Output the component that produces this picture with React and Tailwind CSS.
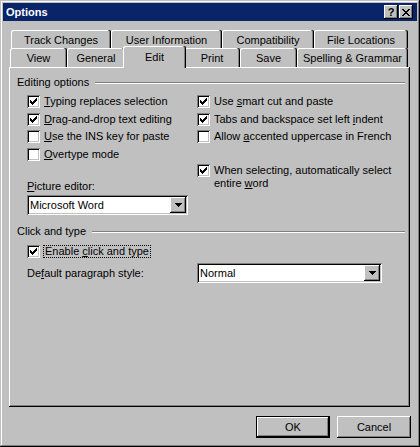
import React from 'react';

// Classic Windows "Options" dialog (Word, Edit tab)

const raised = 'shadow-[inset_-1px_-1px_#000,inset_1px_1px_#fff,inset_-2px_-2px_#808080]';
const sunken = 'shadow-[inset_1px_1px_#808080,inset_-1px_-1px_#fff,inset_2px_2px_#000,inset_-2px_-2px_#c0c0c0]';

const CheckMark = () => {
  const cols = [2, 3, 4, 3, 2, 1, 0];
  return (
    <svg width="7" height="7" viewBox="0 0 7 7" shapeRendering="crispEdges">
      {cols.map((top, x) => (
        <rect key={x} x={x} y={top} width="1" height="3" fill="#000" />
      ))}
    </svg>
  );
};

const Box = ({ checked }) => (
  <span className={`w-[13px] h-[13px] shrink-0 bg-white flex items-center justify-center ${sunken}`}>
    {checked && <CheckMark />}
  </span>
);

const CheckRow = ({ checked, h = 'h-[17px]', children }) => (
  <div className={`flex items-center gap-[4px] ${h}`}>
    <Box checked={checked} />
    <span className="leading-[13px] whitespace-nowrap">{children}</span>
  </div>
);

const Arrow = () => (
  <svg width="7" height="4" viewBox="0 0 7 4" shapeRendering="crispEdges">
    <path d="M0 0h7v1h-7z M1 1h5v1h-5z M2 2h3v1h-3z M3 3h1v1h-1z" fill="#000" />
  </svg>
);

const Combo = ({ w, text }) => (
  <div className={`${w} h-[20px] bg-white flex items-stretch p-[2px] ${sunken}`}>
    <span className="flex-1 pl-[1px] flex items-center">{text}</span>
    <span className={`w-[16px] bg-[#c0c0c0] flex items-center justify-center ${raised}`}>
      <Arrow />
    </span>
  </div>
);

const GroupLabel = ({ children }) => (
  <div className="flex items-center gap-[6px] h-[13px]">
    <span className="leading-[13px]">{children}</span>
    <div className="flex-1 border-t border-t-[#808080] border-b border-b-white" />
  </div>
);

const tabShadow = 'shadow-[inset_-1px_0_#000,inset_-2px_0_#808080,inset_1px_1px_#fff]';

const Tab = ({ w, label, selected }) =>
  selected ? (
    <div
      className={`${w} -mx-[2px] -mt-[2px] h-[22px] self-start relative z-10 bg-[#c0c0c0] rounded-t-[2px] flex items-center justify-center pt-[1px] ${tabShadow}`}
    >
      {label}
    </div>
  ) : (
    <div className={`${w} h-full rounded-t-[2px] flex items-center justify-center pt-[2px] ${tabShadow}`}>{label}</div>
  );

export default function App() {
  return (
    <div className="w-[420px] h-[447px] p-[3px] bg-[#c0c0c0] text-[11px] leading-[13px] text-black font-['Liberation_Sans',Arial,sans-serif] shadow-[inset_-1px_-1px_#000,inset_1px_1px_#c0c0c0,inset_-2px_-2px_#808080,inset_2px_2px_#fff]">
      {/* title bar */}
      <div className="h-[18px] bg-[#0a246a] flex items-center justify-between pl-[3px] pr-[4px]">
        <span className="text-white font-bold">Options</span>
        <div className="flex gap-[1px]">
          <span className={`w-[14px] h-[14px] bg-[#c0c0c0] flex items-center justify-center font-bold text-[11px] leading-none ${raised}`}>
            ?
          </span>
          <span className={`w-[14px] h-[14px] bg-[#c0c0c0] flex items-center justify-center ${raised}`}>
            <svg width="8" height="7" viewBox="0 0 8 7" shapeRendering="crispEdges">
              <path
                d="M0 0h2v1h-2z M6 0h2v1h-2z M1 1h2v1h-2z M5 1h2v1h-2z M2 2h4v1h-4z M3 3h2v1h-2z M2 4h4v1h-4z M1 5h2v1h-2z M5 5h2v1h-2z M0 6h2v1h-2z M6 6h2v1h-2z"
                fill="#000"
              />
            </svg>
          </span>
        </div>
      </div>

      {/* tab control */}
      <div className="ml-[6px] w-[401px]">
        <div className="mt-[9px] h-[18px] flex pl-[2px]">
          <Tab w="w-[100px]" label="Track Changes" />
          <Tab w="w-[111px]" label="User Information" />
          <Tab w="w-[92px]" label="Compatibility" />
          <Tab w="w-[94px]" label="File Locations" />
        </div>
        <div className="h-[19px] flex pl-[1px]">
          <Tab w="w-[57px]" label="View" />
          <Tab w="w-[58px]" label="General" />
          <Tab w="w-[63px]" label="Edit" selected />
          <Tab w="w-[56px]" label="Print" />
          <Tab w="w-[57px]" label="Save" />
          <Tab w="w-[111px]" label="Spelling & Grammar" />
        </div>

        <div className={`h-[340px] pl-[8px] pr-[5px] pt-[9px] ${raised}`}>
          <GroupLabel>Editing options</GroupLabel>
          <div className="flex pl-[10px] mt-[4px]">
            <div className="w-[170px]">
              <CheckRow checked>
                <u>T</u>yping replaces selection
              </CheckRow>
              <CheckRow checked h="h-[18px]">
                <u>D</u>rag-and-drop text editing
              </CheckRow>
              <CheckRow>
                <u>U</u>se the INS key for paste
              </CheckRow>
              <CheckRow h="h-[18px]">
                <u>O</u>vertype mode
              </CheckRow>
              <div className="mt-[17px] leading-[13px]">
                <u>P</u>icture editor:
              </div>
              <div className="mt-[2px]">
                <Combo w="w-[161px]" text="Microsoft Word" />
              </div>
            </div>
            <div>
              <CheckRow checked>
                Use <u>s</u>mart cut and paste
              </CheckRow>
              <CheckRow checked h="h-[18px]">
                Tabs and backspace set left <u>i</u>ndent
              </CheckRow>
              <CheckRow>
                Allow <u>a</u>ccented uppercase in French
              </CheckRow>
              <div className="mt-[19px] flex items-start gap-[4px]">
                <Box checked />
                <span className="leading-[13px]">
                  When selecting, automatically select
                  <br />
                  entire <u>w</u>ord
                </span>
              </div>
            </div>
          </div>

          <div className="mt-[10px]">
            <GroupLabel>Click and type</GroupLabel>
          </div>
          <div className="pl-[10px]">
            <div className="mt-[5px] h-[17px] flex items-center gap-[3px]">
              <Box checked />
              <span className="border border-dotted border-black px-[1px] leading-[11px] h-[13px]">
                Enable <u>c</u>lick and type
              </span>
            </div>
            <div className="mt-[3px] flex items-center">
              <span className="w-[170px]">
                De<u>f</u>ault paragraph style:
              </span>
              <Combo w="w-[185px]" text="Normal" />
            </div>
          </div>
        </div>
      </div>

      {/* buttons */}
      <div className="mt-[9px] flex justify-end gap-[7px] pr-[6px]">
        <button className="w-[74px] h-[22px] border border-black bg-[#c0c0c0] p-0">
          <span className={`w-full h-full flex items-center justify-center ${raised}`}>OK</span>
        </button>
        <button className={`w-[74px] h-[22px] bg-[#c0c0c0] flex items-center justify-center ${raised}`}>Cancel</button>
      </div>
    </div>
  );
}
